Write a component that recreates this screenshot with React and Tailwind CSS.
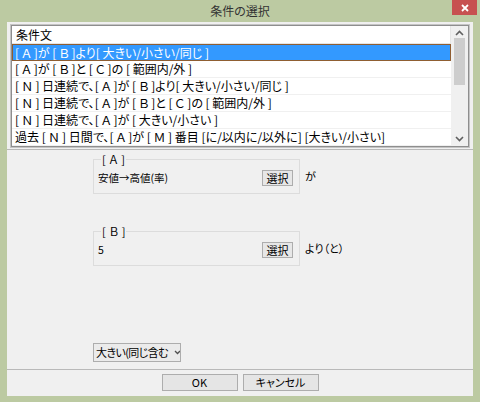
import React from "react";

const FONT = {
  fontFamily: '"Noto Sans CJK JP", "Noto Sans", sans-serif',
};

const rows = [
  "[ Ａ ]が [ Ｂ ]より[ 大きい/小さい/同じ ]",
  "[ Ａ ]が [ Ｂ ]と [ Ｃ ]の [ 範囲内/外 ]",
  "[ Ｎ ] 日連続で、[ Ａ ]が [ Ｂ ]より[ 大きい/小さい/同じ ]",
  "[ Ｎ ] 日連続で、[ Ａ ]が [ Ｂ ]と [ Ｃ ]の [ 範囲内/外 ]",
  "[ Ｎ ] 日連続で、[ Ａ ]が [ 大きい/小さい ]",
  "過去 [ Ｎ ] 日間で、[ Ａ ]が [ Ｍ ] 番目 [に/以内に/以外に] [大きい/小さい]",
];

function Chevron({ up }) {
  return (
    <svg width="9" height="6" viewBox="0 0 9 6">
      <path
        d={up ? "M1 5 L4.5 1.5 L8 5" : "M1 1 L4.5 4.5 L8 1"}
        fill="none"
        stroke="#606060"
        strokeWidth="1.6"
      />
    </svg>
  );
}

function SmallChevron() {
  return (
    <svg width="7" height="5" viewBox="0 0 7 5" className="shrink-0">
      <path d="M1 1 L3.5 3.5 L6 1" fill="none" stroke="#505050" strokeWidth="1.3" />
    </svg>
  );
}

function SmallButton({ children }) {
  return (
    <button className="w-[31px] h-[16px] border border-[#adadad] bg-[#e7e7e7] text-[11px] leading-none text-black flex items-center justify-center">
      {children}
    </button>
  );
}

function Group({ label, value }) {
  return (
    <fieldset className="w-[207px] border border-[#dcdcdc] pl-[4px] pr-[6px] pt-[4px] pb-[7px]">
      <legend className="ml-[3px] px-[1px] text-[11px] leading-[14px] text-black [word-spacing:1px]">{label}</legend>
      <div className="flex items-center justify-between">
        <span className="text-[10.5px] leading-none text-black">{value}</span>
        <SmallButton>選択</SmallButton>
      </div>
    </fieldset>
  );
}

export default function App() {
  return (
    <div
      className="w-[480px] h-[402px] bg-[#bccaa2] flex flex-col [font-feature-settings:'palt']"
      style={FONT}
    >
      <div className="relative h-[22px] flex items-center justify-center shrink-0">
        <span className="text-[12px] text-[#333] leading-none">条件の選択</span>
        <div className="absolute left-[452px] top-0 w-[25px] h-[15px] bg-[#c75050] flex items-center justify-center">
          <svg width="8" height="8" viewBox="0 0 8 8">
            <path d="M1 1 L7 7 M7 1 L1 7" stroke="#fff" strokeWidth="1.8" />
          </svg>
        </div>
      </div>
      <div className="mx-[7px] w-[466px] h-[374px] bg-[#f0f0f0] flex flex-col">
        <div className="px-[3px] pt-[2px] pb-[1px] border-b border-[#b9b9b9]">
          <div className="h-[124px] border border-[#c4c4c4] flex flex-col">
            <div className="flex-1 border border-[#8e8e8e] bg-white flex">
              <div className="flex-1 flex flex-col">
                <div className="h-[18px] border-b border-r border-[#e5e5e5] flex items-center pl-[4px] text-[12px] leading-none text-black">
                  条件文
                </div>
                {rows.map((r, i) => (
                  <div
                    key={i}
                    className={
                      i === 0
                        ? "h-[17px] bg-[#3399ff] border border-[#8f5e32] flex items-center pl-[2px] text-[12px] leading-none text-white whitespace-nowrap"
                        : "h-[17px] border-b border-[#f0f0f0] flex items-center pl-[3px] text-[12px] leading-none text-black whitespace-nowrap"
                    }
                  >
                    {r}
                  </div>
                ))}
              </div>
              <div className="w-[17px] bg-[#f0f0f0] flex flex-col items-center">
                <div className="h-[14px] flex items-center justify-center">
                  <Chevron up />
                </div>
                <div className="w-[11px] h-[47px] bg-[#cdcdcd] mt-[-2px]" />
                <div className="flex-1" />
                <div className="h-[14px] flex items-center justify-center">
                  <Chevron />
                </div>
              </div>
            </div>
          </div>
        </div>
        <div className="flex-1 flex flex-col pl-[86px] pt-[2px] border-b border-[#b9b9b9]">
          <div className="flex items-start">
            <Group label="[ Ａ ]" value="安値→高値(率)" />
            <span className="ml-[5px] mt-[19px] text-[11px] leading-none text-black">が</span>
          </div>
          <div className="flex items-start mt-[30px]">
            <Group label="[ Ｂ ]" value="5" />
            <span className="ml-[5px] mt-[19px] text-[11px] leading-none text-black">より（と）</span>
          </div>
          <div className="mt-auto mb-[7px] w-[88px] h-[19px] border border-[#adadad] bg-[#ebebeb] flex items-center pl-[2px] pr-[5px] gap-[6px] overflow-hidden">
            <span className="text-[11px] leading-none text-black whitespace-nowrap tracking-[-0.6px]">大きい(同じ含む</span>
            <SmallChevron />
          </div>
        </div>
        <div className="h-[26px] flex justify-center gap-[5px] pt-[4px]">
          <button className="w-[76px] h-[17px] border border-[#adadad] bg-[#e5e5e5] text-[11px] leading-none text-black">
            OK
          </button>
          <button className="w-[76px] h-[17px] border border-[#adadad] bg-[#e5e5e5] text-[11px] leading-none text-black">
            キャンセル
          </button>
        </div>
      </div>
    </div>
  );
}
